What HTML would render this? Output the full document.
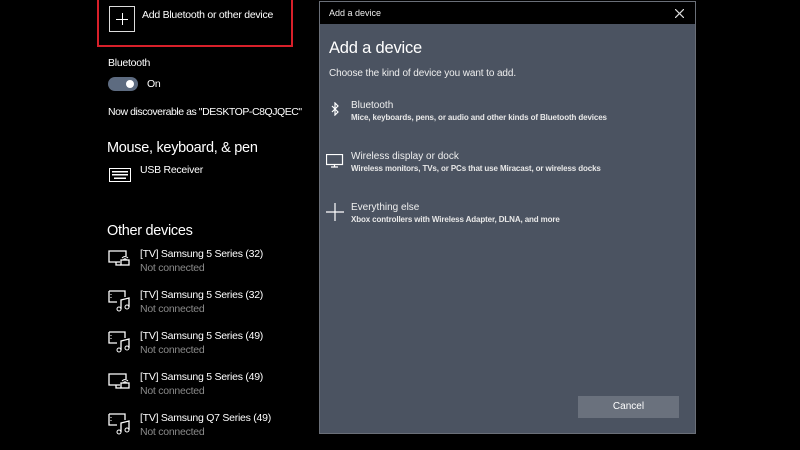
<!DOCTYPE html>
<html><head><meta charset="utf-8"><style>
*{margin:0;padding:0;box-sizing:border-box}
body{width:800px;height:450px;background:#000;font-family:"Liberation Sans",sans-serif;color:#fff;position:relative;overflow:hidden}
.a{position:absolute;white-space:nowrap}
.red{left:97px;top:0;width:196px;height:47px;border:2px solid #d8202a;border-top:none}
.plus{left:109px;top:6px;width:26px;height:26px;border:1px solid #ddd}
.plus:before{content:"";position:absolute;left:6px;top:12px;width:12px;height:1px;background:#fff}
.plus:after{content:"";position:absolute;left:12px;top:6px;width:1px;height:12px;background:#fff}
.tog{left:108px;top:77px;width:30px;height:14px;border-radius:7px;background:#5d6b80}
.tog:after{content:"";position:absolute;left:18px;top:3px;width:8px;height:8px;border-radius:4px;background:#fff}
.s13{font-size:10.5px;letter-spacing:-0.25px}
.h{font-size:14.5px;letter-spacing:-0.3px}
.g{color:#8a8a8a;font-size:10.5px;letter-spacing:-0.25px}
.dlg{left:319px;top:1px;width:377px;height:433px;background:#4b5361;border:1px solid #6a6f78}
.tb{position:absolute;left:0;top:0;width:100%;height:22px;background:#000}
.btn{left:258px;top:394px;width:101px;height:22px;background:#6a717d;font-size:10px;text-align:center;line-height:22px}
.dt{font-size:10px;color:#f0f0f0}
.ds{font-size:8px;font-weight:bold;color:#e8e8e8;letter-spacing:-0.12px}
</style></head><body>
<div class="a red"></div>
<div class="a plus"></div>
<div class="a s13" style="left:142px;top:9px">Add Bluetooth or other device</div>
<div class="a s13" style="left:108px;top:57px">Bluetooth</div>
<div class="a tog"></div>
<div class="a s13" style="left:147px;top:78px">On</div>
<div class="a s13" style="left:108px;top:106px;letter-spacing:-0.45px">Now discoverable as "DESKTOP-C8QJQEC"</div>
<div class="a h" style="left:107px;top:140px">Mouse, keyboard, &amp; pen</div>
<svg class="a" style="left:109px;top:168px" width="22" height="14"><rect x="0.5" y="0.5" width="21" height="13" fill="none" stroke="#fff"/><g fill="#fff"><rect x="3" y="3" width="16" height="1.5"/><rect x="3" y="6" width="16" height="1.5"/><rect x="5" y="9.5" width="12" height="1.5"/></g></svg>
<div class="a s13" style="left:140px;top:164px">USB Receiver</div>
<div class="a h" style="left:107px;top:223px">Other devices</div>
<svg class="a" style="left:108px;top:250px" width="22" height="18"><path d="M12 12H1V1h17v5M8 12v3h5" fill="none" stroke="#fff" stroke-width="1.3"/><rect x="13" y="10" width="8" height="5" fill="none" stroke="#fff" stroke-width="1.3"/><path d="M14 8q3-3 6 0M15.5 9.5q1.5-1.5 3 0" fill="none" stroke="#fff"/></svg>
<div class="a s13" style="left:140px;top:248px">[TV] Samsung 5 Series (32)</div><div class="a g" style="left:140px;top:262px">Not connected</div>
<svg class="a" style="left:108px;top:290px" width="24" height="22"><path d="M1 1h16v6M1 1v11h8" fill="none" stroke="#fff" stroke-width="1.3"/><path d="M3 4v1M3 7v1" stroke="#fff"/><path d="M13 19V10l8-2v9" fill="none" stroke="#fff" stroke-width="1.3"/><circle cx="11" cy="19" r="2" fill="none" stroke="#fff"/><circle cx="19" cy="17" r="2" fill="none" stroke="#fff"/></svg>
<div class="a s13" style="left:140px;top:289px">[TV] Samsung 5 Series (32)</div><div class="a g" style="left:140px;top:303px">Not connected</div>
<svg class="a" style="left:108px;top:331px" width="24" height="22"><path d="M1 1h16v6M1 1v11h8" fill="none" stroke="#fff" stroke-width="1.3"/><path d="M3 4v1M3 7v1" stroke="#fff"/><path d="M13 19V10l8-2v9" fill="none" stroke="#fff" stroke-width="1.3"/><circle cx="11" cy="19" r="2" fill="none" stroke="#fff"/><circle cx="19" cy="17" r="2" fill="none" stroke="#fff"/></svg>
<div class="a s13" style="left:140px;top:330px">[TV] Samsung 5 Series (49)</div><div class="a g" style="left:140px;top:344px">Not connected</div>
<svg class="a" style="left:108px;top:373px" width="22" height="18"><path d="M12 12H1V1h17v5M8 12v3h5" fill="none" stroke="#fff" stroke-width="1.3"/><rect x="13" y="10" width="8" height="5" fill="none" stroke="#fff" stroke-width="1.3"/><path d="M14 8q3-3 6 0M15.5 9.5q1.5-1.5 3 0" fill="none" stroke="#fff"/></svg>
<div class="a s13" style="left:140px;top:371px">[TV] Samsung 5 Series (49)</div><div class="a g" style="left:140px;top:385px">Not connected</div>
<svg class="a" style="left:108px;top:413px" width="24" height="22"><path d="M1 1h16v6M1 1v11h8" fill="none" stroke="#fff" stroke-width="1.3"/><path d="M3 4v1M3 7v1" stroke="#fff"/><path d="M13 19V10l8-2v9" fill="none" stroke="#fff" stroke-width="1.3"/><circle cx="11" cy="19" r="2" fill="none" stroke="#fff"/><circle cx="19" cy="17" r="2" fill="none" stroke="#fff"/></svg>
<div class="a s13" style="left:140px;top:412px">[TV] Samsung Q7 Series (49)</div><div class="a g" style="left:140px;top:426px">Not connected</div>

<div class="a dlg">
 <div class="tb"></div>
 <div class="a" style="left:9px;top:6px;font-size:9px;color:#eee">Add a device</div>
 <svg class="a" style="left:355px;top:7px" width="9" height="9"><path d="M0 0L9 9M9 0L0 9" stroke="#ddd" stroke-width="1.2"/></svg>
 <div class="a" style="left:9px;top:37px;font-size:16.5px;letter-spacing:-0.2px">Add a device</div>
 <div class="a" style="left:9px;top:66px;font-size:10px;color:#eee;letter-spacing:-0.1px">Choose the kind of device you want to add.</div>
 <svg class="a" style="left:11px;top:100px" width="8" height="14"><path d="M1 4l6 6-3 3V1l3 3-6 6" fill="none" stroke="#fff" stroke-width="1.2"/></svg>
 <div class="a dt" style="left:31px;top:98px">Bluetooth</div>
 <div class="a ds" style="left:31px;top:111px">Mice, keyboards, pens, or audio and other kinds of Bluetooth devices</div>
 <svg class="a" style="left:6px;top:152px" width="18" height="14"><rect x="0.5" y="0.5" width="16" height="10" fill="none" stroke="#fff" stroke-width="1.2"/><path d="M5 13h7M8.5 11v2" stroke="#fff" stroke-width="1.2"/></svg>
 <div class="a dt" style="left:31px;top:149px">Wireless display or dock</div>
 <div class="a ds" style="left:31px;top:162px">Wireless monitors, TVs, or PCs that use Miracast, or wireless docks</div>
 <svg class="a" style="left:6px;top:201px" width="18" height="18"><path d="M0 9h18M9 0v18" stroke="#fff" stroke-width="1.2"/></svg>
 <div class="a dt" style="left:31px;top:200px">Everything else</div>
 <div class="a ds" style="left:31px;top:213px">Xbox controllers with Wireless Adapter, DLNA, and more</div>
 <div class="a btn">Cancel</div>
</div>
</body></html>
